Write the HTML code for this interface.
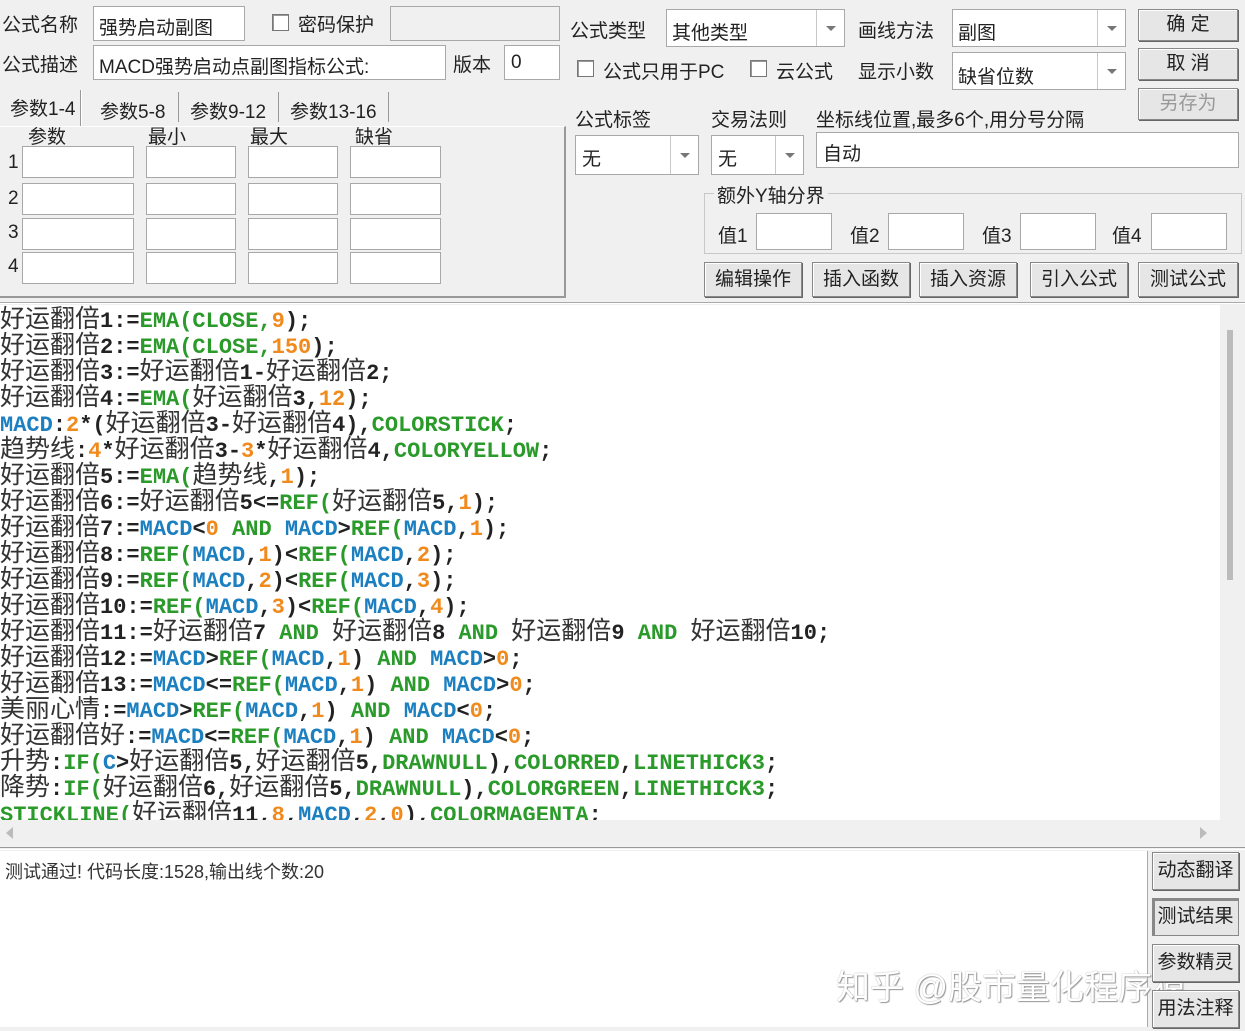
<!DOCTYPE html>
<html><head><meta charset="utf-8"><style>
*{box-sizing:border-box;margin:0;padding:0}
body{width:1245px;height:1031px;overflow:hidden;background:#f0f0f0;position:relative;font-family:"Liberation Sans","Noto Sans CJK SC",sans-serif;color:#222;font-size:19px}
.a{position:absolute;white-space:nowrap}
.in{position:absolute;background:#fff;border:1px solid #a8a8a8}
.btn{position:absolute;background:#e6e6e6;border:1px solid #888;box-shadow:inset 1px 1px 0 #fff, 1px 1px 0 #666;text-align:center;font-size:19px;line-height:34px}
.dd{position:absolute;right:0;top:0;bottom:0;width:28px;border-left:1px solid #c8c8c8}
.dd:after{content:"";position:absolute;left:9px;top:50%;margin-top:-2px;border:5px solid transparent;border-top:5px solid #777}
.cb{position:absolute;width:17px;height:17px;background:#fff;border:1px solid #777;box-shadow:inset 1px 1px 0 #999}
#code{position:absolute;left:0;top:305px;width:1220px;height:515px;background:#fff;overflow:hidden}
.l{position:absolute;left:0;height:26px;line-height:24px;white-space:nowrap;font-family:"Liberation Mono",monospace;font-weight:bold;font-size:22px;color:#222}
.c{font-family:"Noto Sans CJK SC",sans-serif;font-weight:normal;font-size:25px;letter-spacing:0;color:#333}
.g{color:#2a9a2a}.b{color:#1c7fc0}.o{color:#f08a1c}
</style></head><body>
<div class="a" style="left:2px;top:10px">公式名称</div>
<div class="in" style="left:93px;top:6px;width:152px;height:35px"><span class="a" style="left:5px;top:6px">强势启动副图</span></div>
<div class="cb" style="left:272px;top:14px"></div>
<div class="a" style="left:298px;top:10px">密码保护</div>
<div class="in" style="left:390px;top:6px;width:170px;height:35px;background:#f0f0f0"></div>
<div class="a" style="left:2px;top:50px">公式描述</div>
<div class="in" style="left:93px;top:45px;width:353px;height:35px"><span class="a" style="left:5px;top:6px">MACD强势启动点副图指标公式:</span></div>
<div class="a" style="left:453px;top:50px">版本</div>
<div class="in" style="left:504px;top:45px;width:56px;height:35px"><span class="a" style="left:6px;top:6px">0</span></div>
<!-- tabs -->
<div class="a" style="left:10px;top:94px">参数1-4</div>
<div class="a" style="left:80px;top:90px;width:2px;height:36px;border-left:1px solid #999;border-right:1px solid #fff"></div>
<div class="a" style="left:100px;top:97px">参数5-8</div>
<div class="a" style="left:178px;top:92px;width:2px;height:30px;border-left:1px solid #999"></div>
<div class="a" style="left:190px;top:97px">参数9-12</div>
<div class="a" style="left:278px;top:92px;width:2px;height:30px;border-left:1px solid #999"></div>
<div class="a" style="left:290px;top:97px">参数13-16</div>
<div class="a" style="left:388px;top:92px;width:2px;height:30px;border-left:1px solid #999"></div>
<div class="a" style="left:0;top:126px;width:566px;height:172px;border-right:2px solid #999;border-bottom:2px solid #999;border-top:1px solid #fff"></div>
<div class="a" style="left:28px;top:122px">参数</div>
<div class="a" style="left:148px;top:122px">最小</div>
<div class="a" style="left:250px;top:122px">最大</div>
<div class="a" style="left:355px;top:122px">缺省</div>
<div class="a" style="left:8px;top:152px">1</div><div class="a" style="left:8px;top:188px">2</div><div class="a" style="left:8px;top:222px">3</div><div class="a" style="left:8px;top:256px">4</div>
<div class="in" style="left:22px;top:146px;width:112px;height:32px"></div><div class="in" style="left:146px;top:146px;width:90px;height:32px"></div><div class="in" style="left:248px;top:146px;width:90px;height:32px"></div><div class="in" style="left:350px;top:146px;width:91px;height:32px"></div>
<div class="in" style="left:22px;top:183px;width:112px;height:32px"></div><div class="in" style="left:146px;top:183px;width:90px;height:32px"></div><div class="in" style="left:248px;top:183px;width:90px;height:32px"></div><div class="in" style="left:350px;top:183px;width:91px;height:32px"></div>
<div class="in" style="left:22px;top:218px;width:112px;height:32px"></div><div class="in" style="left:146px;top:218px;width:90px;height:32px"></div><div class="in" style="left:248px;top:218px;width:90px;height:32px"></div><div class="in" style="left:350px;top:218px;width:91px;height:32px"></div>
<div class="in" style="left:22px;top:252px;width:112px;height:32px"></div><div class="in" style="left:146px;top:252px;width:90px;height:32px"></div><div class="in" style="left:248px;top:252px;width:90px;height:32px"></div><div class="in" style="left:350px;top:252px;width:91px;height:32px"></div>
<!-- right top -->
<div class="a" style="left:570px;top:16px">公式类型</div>
<div class="in" style="left:666px;top:9px;width:179px;height:38px"><span class="a" style="left:5px;top:8px">其他类型</span><div class="dd"></div></div>
<div class="a" style="left:858px;top:16px">画线方法</div>
<div class="in" style="left:952px;top:9px;width:174px;height:38px"><span class="a" style="left:5px;top:8px">副图</span><div class="dd"></div></div>
<div class="cb" style="left:577px;top:60px"></div><div class="a" style="left:603px;top:57px">公式只用于PC</div>
<div class="cb" style="left:750px;top:60px"></div><div class="a" style="left:776px;top:57px">云公式</div>
<div class="a" style="left:858px;top:57px">显示小数</div>
<div class="in" style="left:952px;top:52px;width:174px;height:38px"><span class="a" style="left:5px;top:9px">缺省位数</span><div class="dd"></div></div>
<div class="btn" style="left:1138px;top:9px;width:100px;height:32px;line-height:30px">确 定</div>
<div class="btn" style="left:1138px;top:48px;width:100px;height:32px;line-height:30px">取 消</div>
<div class="btn" style="left:1138px;top:88px;width:100px;height:32px;line-height:30px;color:#999">另存为</div>
<div class="a" style="left:575px;top:105px">公式标签</div>
<div class="a" style="left:711px;top:105px">交易法则</div>
<div class="a" style="left:816px;top:105px">坐标线位置,最多6个,用分号分隔</div>
<div class="in" style="left:575px;top:135px;width:124px;height:40px"><span class="a" style="left:6px;top:8px">无</span><div class="dd"></div></div>
<div class="in" style="left:711px;top:135px;width:93px;height:40px"><span class="a" style="left:6px;top:8px">无</span><div class="dd"></div></div>
<div class="in" style="left:816px;top:132px;width:423px;height:36px"><span class="a" style="left:6px;top:6px">自动</span></div>
<div class="a" style="left:704px;top:193px;width:538px;height:61px;border:1px solid #c8c8c8"></div>
<div class="a" style="left:714px;top:181px;background:#f0f0f0;padding:0 3px">额外Y轴分界</div>
<div class="a" style="left:718px;top:221px">值1</div><div class="in" style="left:756px;top:213px;width:76px;height:37px"></div>
<div class="a" style="left:850px;top:221px">值2</div><div class="in" style="left:888px;top:213px;width:76px;height:37px"></div>
<div class="a" style="left:982px;top:221px">值3</div><div class="in" style="left:1020px;top:213px;width:76px;height:37px"></div>
<div class="a" style="left:1112px;top:221px">值4</div><div class="in" style="left:1151px;top:213px;width:76px;height:37px"></div>
<div class="btn" style="left:704px;top:262px;width:98px;height:35px">编辑操作</div>
<div class="btn" style="left:812px;top:262px;width:98px;height:35px">插入函数</div>
<div class="btn" style="left:919px;top:262px;width:98px;height:35px">插入资源</div>
<div class="btn" style="left:1030px;top:262px;width:98px;height:35px">引入公式</div>
<div class="btn" style="left:1138px;top:262px;width:100px;height:35px">测试公式</div>
<div class="a" style="left:0;top:302px;width:1245px;height:2px;background:#fff;border-top:1px solid #aaa"></div>
<div id="code">
<div class="l" style="top:0"><span class="c">好运翻倍</span>1:=<span class="g">EMA(CLOSE,</span><span class="o">9</span>);</div>
<div class="l" style="top:26px"><span class="c">好运翻倍</span>2:=<span class="g">EMA(CLOSE,</span><span class="o">150</span>);</div>
<div class="l" style="top:52px"><span class="c">好运翻倍</span>3:=<span class="c">好运翻倍</span>1-<span class="c">好运翻倍</span>2;</div>
<div class="l" style="top:78px"><span class="c">好运翻倍</span>4:=<span class="g">EMA(</span><span class="c">好运翻倍</span>3,<span class="o">12</span>);</div>
<div class="l" style="top:104px"><span class="b">MACD</span>:<span class="o">2</span>*(<span class="c">好运翻倍</span>3-<span class="c">好运翻倍</span>4),<span class="g">COLORSTICK</span>;</div>
<div class="l" style="top:130px"><span class="c">趋势线</span>:<span class="o">4</span>*<span class="c">好运翻倍</span>3-<span class="o">3</span>*<span class="c">好运翻倍</span>4,<span class="g">COLORYELLOW</span>;</div>
<div class="l" style="top:156px"><span class="c">好运翻倍</span>5:=<span class="g">EMA(</span><span class="c">趋势线</span>,<span class="o">1</span>);</div>
<div class="l" style="top:182px"><span class="c">好运翻倍</span>6:=<span class="c">好运翻倍</span>5&lt;=<span class="g">REF(</span><span class="c">好运翻倍</span>5,<span class="o">1</span>);</div>
<div class="l" style="top:208px"><span class="c">好运翻倍</span>7:=<span class="b">MACD</span>&lt;<span class="o">0</span> <span class="g">AND</span> <span class="b">MACD</span>&gt;<span class="g">REF(</span><span class="b">MACD</span>,<span class="o">1</span>);</div>
<div class="l" style="top:234px"><span class="c">好运翻倍</span>8:=<span class="g">REF(</span><span class="b">MACD</span>,<span class="o">1</span>)&lt;<span class="g">REF(</span><span class="b">MACD</span>,<span class="o">2</span>);</div>
<div class="l" style="top:260px"><span class="c">好运翻倍</span>9:=<span class="g">REF(</span><span class="b">MACD</span>,<span class="o">2</span>)&lt;<span class="g">REF(</span><span class="b">MACD</span>,<span class="o">3</span>);</div>
<div class="l" style="top:286px"><span class="c">好运翻倍</span>10:=<span class="g">REF(</span><span class="b">MACD</span>,<span class="o">3</span>)&lt;<span class="g">REF(</span><span class="b">MACD</span>,<span class="o">4</span>);</div>
<div class="l" style="top:312px"><span class="c">好运翻倍</span>11:=<span class="c">好运翻倍</span>7 <span class="g">AND</span> <span class="c">好运翻倍</span>8 <span class="g">AND</span> <span class="c">好运翻倍</span>9 <span class="g">AND</span> <span class="c">好运翻倍</span>10;</div>
<div class="l" style="top:338px"><span class="c">好运翻倍</span>12:=<span class="b">MACD</span>&gt;<span class="g">REF(</span><span class="b">MACD</span>,<span class="o">1</span>) <span class="g">AND</span> <span class="b">MACD</span>&gt;<span class="o">0</span>;</div>
<div class="l" style="top:364px"><span class="c">好运翻倍</span>13:=<span class="b">MACD</span>&lt;=<span class="g">REF(</span><span class="b">MACD</span>,<span class="o">1</span>) <span class="g">AND</span> <span class="b">MACD</span>&gt;<span class="o">0</span>;</div>
<div class="l" style="top:390px"><span class="c">美丽心情</span>:=<span class="b">MACD</span>&gt;<span class="g">REF(</span><span class="b">MACD</span>,<span class="o">1</span>) <span class="g">AND</span> <span class="b">MACD</span>&lt;<span class="o">0</span>;</div>
<div class="l" style="top:416px"><span class="c">好运翻倍好</span>:=<span class="b">MACD</span>&lt;=<span class="g">REF(</span><span class="b">MACD</span>,<span class="o">1</span>) <span class="g">AND</span> <span class="b">MACD</span>&lt;<span class="o">0</span>;</div>
<div class="l" style="top:442px"><span class="c">升势</span>:<span class="g">IF(</span><span class="b">C</span>&gt;<span class="c">好运翻倍</span>5,<span class="c">好运翻倍</span>5,<span class="g">DRAWNULL</span>),<span class="g">COLORRED</span>,<span class="g">LINETHICK3</span>;</div>
<div class="l" style="top:468px"><span class="c">降势</span>:<span class="g">IF(</span><span class="c">好运翻倍</span>6,<span class="c">好运翻倍</span>5,<span class="g">DRAWNULL</span>),<span class="g">COLORGREEN</span>,<span class="g">LINETHICK3</span>;</div>
<div class="l" style="top:494px"><span class="g">STICKLINE(</span><span class="c">好运翻倍</span>11,<span class="o">8</span>,<span class="b">MACD</span>,<span class="o">2</span>,<span class="o">0</span>),<span class="g">COLORMAGENTA</span>;</div>
</div>
<!-- scrollbars -->
<div class="a" style="left:1220px;top:305px;width:25px;height:515px;background:#f0f0f0"></div>
<div class="a" style="left:1227px;top:330px;width:6px;height:250px;background:#bbb"></div>
<div class="a" style="left:0;top:820px;width:1220px;height:27px;background:#f0f0f0"></div>
<div class="a" style="left:6px;top:827px;border:6px solid transparent;border-right:7px solid #bbb;border-left:0"></div>
<div class="a" style="left:1200px;top:827px;border:6px solid transparent;border-left:7px solid #bbb;border-right:0"></div>
<div class="a" style="left:0;top:847px;width:1245px;height:3px;border-top:1px solid #999;border-bottom:1px solid #fff"></div>
<!-- bottom -->
<div class="a" style="left:0;top:851px;width:1148px;height:176px;background:#fff;border-right:1px solid #aaa"></div>
<div class="a" style="left:5px;top:858px;font-size:18px;color:#333">测试通过! 代码长度:1528,输出线个数:20</div>
<div class="a" style="left:836px;top:960px;font-size:34px;color:#fff;text-shadow:0 0 1px #888,1px 1px 1px #999">知乎 @股市量化程序猿</div>
<div class="btn" style="left:1152px;top:852px;width:87px;height:38px;line-height:36px">动态翻译</div>
<div class="btn" style="left:1152px;top:898px;width:87px;height:38px;line-height:36px;box-shadow:inset 2px 2px 0 #888">测试结果</div>
<div class="btn" style="left:1152px;top:944px;width:87px;height:38px;line-height:36px">参数精灵</div>
<div class="btn" style="left:1152px;top:990px;width:87px;height:38px;line-height:36px">用法注释</div>
</body></html>
